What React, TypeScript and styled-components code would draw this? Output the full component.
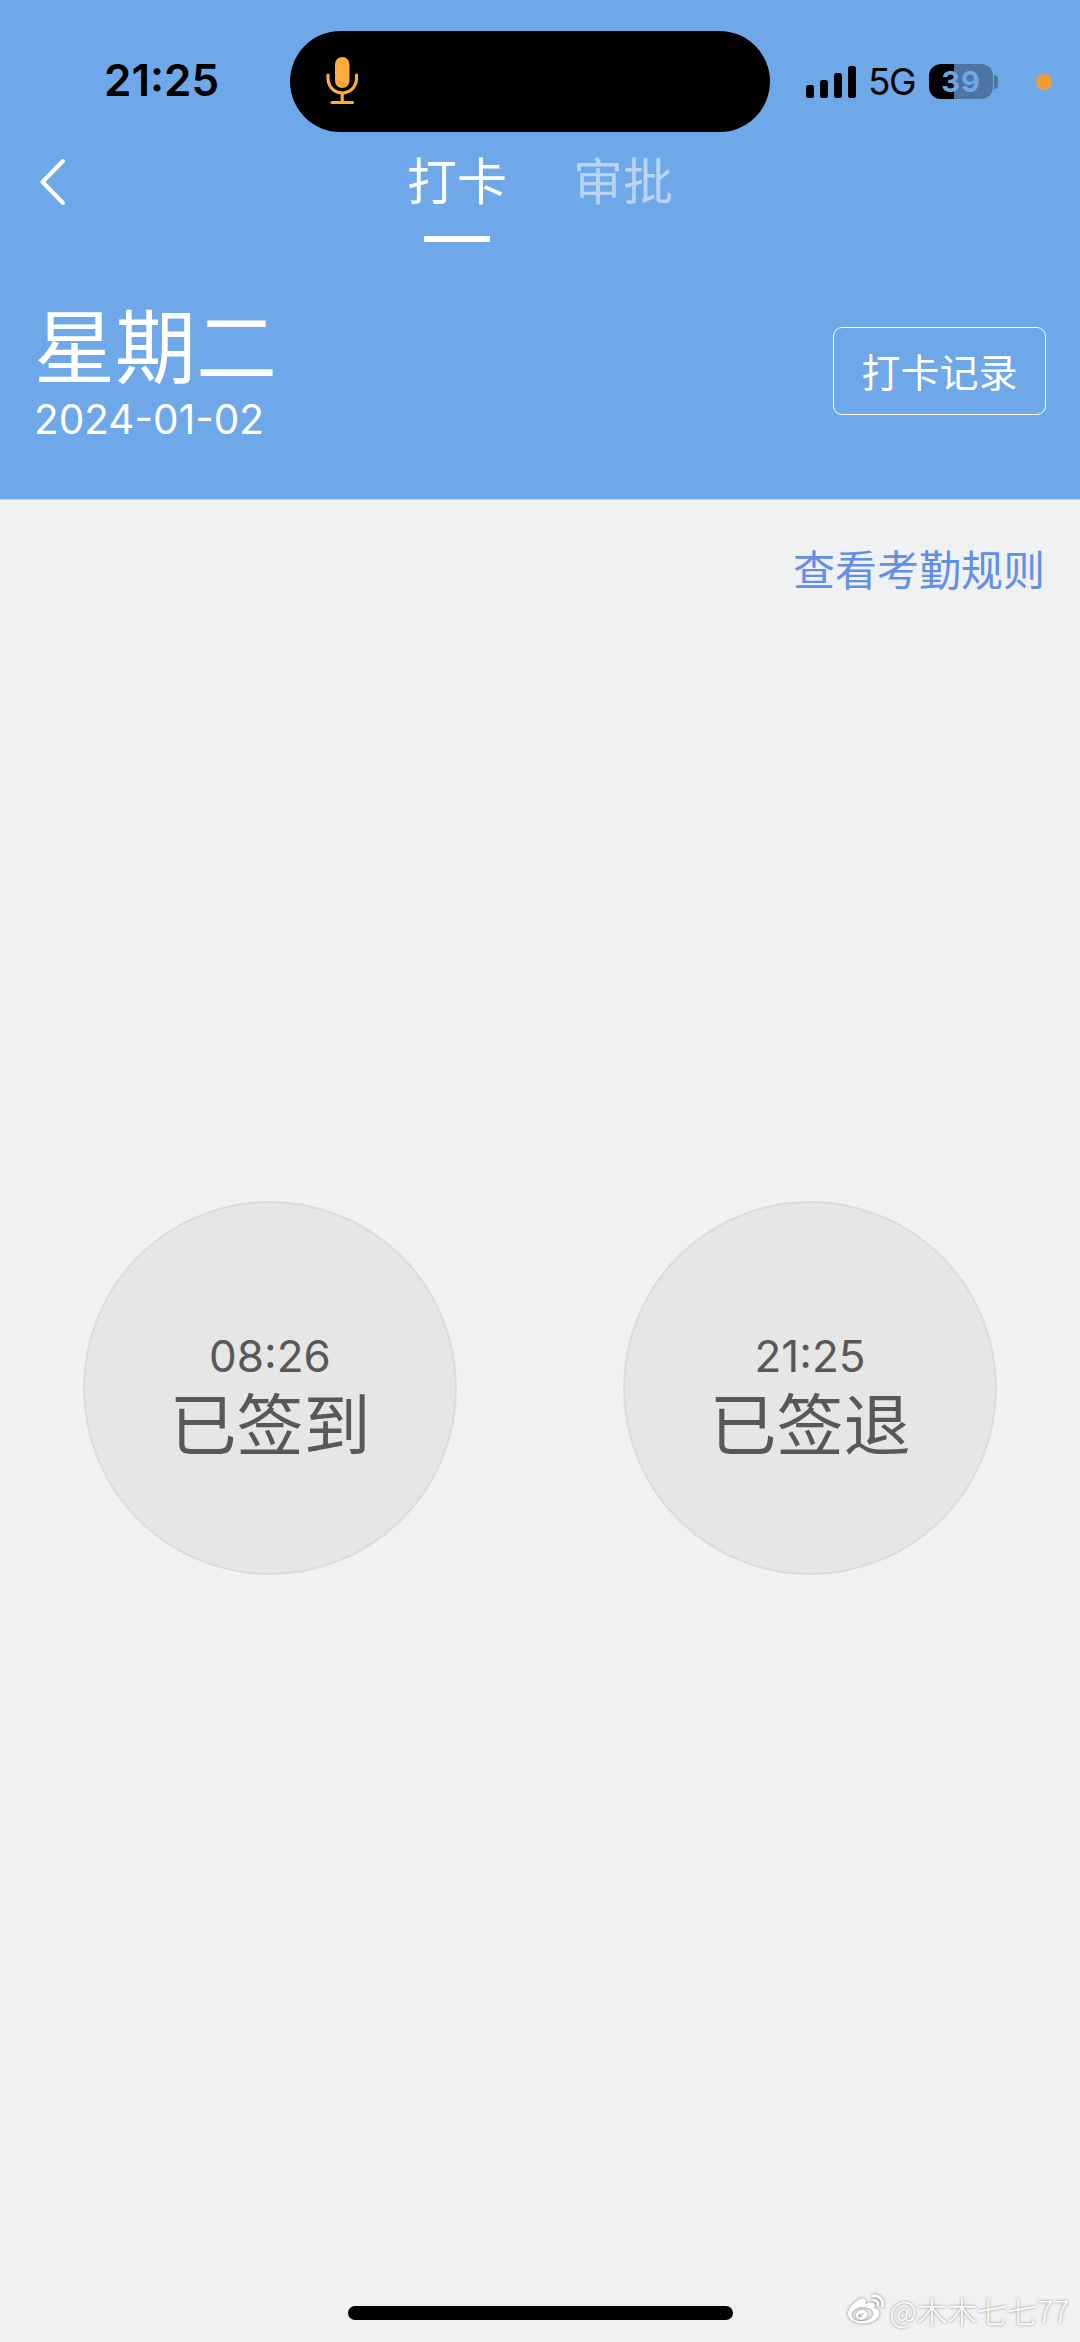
import * as React from "react";
import styled, { createGlobalStyle } from "styled-components";
import { FaWeibo } from "react-icons/fa";

const cjk = `"Noto Sans CJK SC", "Noto Sans", sans-serif`;

const GlobalStyle = createGlobalStyle`
  html, body {
    margin: 0;
    padding: 0;
    background: #f0f1f3;
  }
  * {
    box-sizing: border-box;
  }
`;

const Page = styled.div`
  position: relative;
  width: 1080px;
  height: 2342px;
  overflow: hidden;
  display: flex;
  flex-direction: column;
  background: #f0f1f3;
  font-family: ${cjk};
`;

const Header = styled.header`
  height: 500px;
  flex: none;
  background: #6fa8e9;
  border-bottom: 1px solid #b9d2ee;
`;

const StatusBar = styled.div`
  height: 132px;
  padding-top: 31px;
  display: flex;
  align-items: flex-start;
`;

const Clock = styled.div`
  width: 290px;
  padding: 24px 0 0 104px;
  font: 600 44px/50px Inter, "Liberation Sans", sans-serif;
  color: #000;
`;

const Island = styled.div`
  width: 480px;
  height: 101px;
  padding: 26px 0 0 36px;
  border-radius: 51px;
  background: #000;
`;

const StatusRight = styled.div`
  height: 101px;
  padding-left: 36px;
  display: flex;
  align-items: center;
`;

const Signal = styled.div`
  width: 50px;
  height: 32px;
  display: flex;
  align-items: flex-end;
  justify-content: space-between;
`;

const SignalBar = styled.span<{ $h: number }>`
  width: 8px;
  height: ${(p) => p.$h}px;
  border-radius: 2.5px;
  background: #000;
`;

const Network = styled.div`
  margin-left: 12px;
  font: 400 37px/40px Inter, "Liberation Sans", sans-serif;
  letter-spacing: -1.5px;
  color: #000;
`;

const Battery = styled.div<{ $level: number }>`
  width: 64px;
  height: 35px;
  margin-left: 14px;
  border-radius: 12px;
  display: flex;
  align-items: center;
  justify-content: center;
  background: linear-gradient(
    to right,
    #000 ${(p) => p.$level}%,
    rgba(0, 0, 0, 0.3) ${(p) => p.$level}%
  );
  font: 700 29px/35px Inter, "Liberation Sans", sans-serif;
  letter-spacing: 1px;
  color: #6fa8e9;
`;

const BatteryTip = styled.span`
  width: 4px;
  height: 14px;
  margin-left: 1px;
  border-radius: 0 4px 4px 0;
  background: rgba(0, 0, 0, 0.3);
`;

const RecordingDot = styled.span`
  width: 16px;
  height: 16px;
  margin-left: 38px;
  border-radius: 50%;
  background: #f29a35;
`;

const NavBar = styled.nav`
  position: relative;
  height: 110px;
  padding-top: 12px;
  display: flex;
  justify-content: center;
`;

const BackIcon = styled.svg`
  position: absolute;
  left: 38px;
  top: 26px;
`;

const Tabs = styled.div`
  display: flex;
  gap: 66px;
`;

const Tab = styled.div<{ $active?: boolean }>`
  display: flex;
  flex-direction: column;
  align-items: center;
  font-size: 50px;
  line-height: 68px;
  font-weight: 400;
  color: ${(p) => (p.$active ? "#fff" : "rgba(255,255,255,0.5)")};
`;

const TabLine = styled.span`
  width: 66px;
  height: 6px;
  margin-top: 24px;
  background: #fff;
`;

const DateRow = styled.div`
  display: flex;
  justify-content: space-between;
  align-items: flex-start;
  padding: 56px 34px 0 34px;
`;

const DateBlock = styled.div`
  display: flex;
  flex-direction: column;
`;

const Weekday = styled.div`
  font-size: 81px;
  line-height: 88px;
  font-weight: 400;
  color: #fff;
`;

const DateText = styled.div`
  margin-top: 10px;
  font: 400 40.5px/48px Inter, "Liberation Sans", sans-serif;
  color: #fff;
`;

const RecordButton = styled.div`
  width: 213px;
  height: 88px;
  margin-top: 29px;
  padding-bottom: 3px;
  border: 1.5px solid #fff;
  border-radius: 9px;
  display: flex;
  align-items: center;
  justify-content: center;
  font-size: 39px;
  font-weight: 400;
  color: #fff;
`;

const Main = styled.main`
  flex: 1;
  display: flex;
  flex-direction: column;
`;

const RulesLink = styled.div`
  padding: 38px 35px 0 0;
  text-align: right;
  font-size: 42px;
  line-height: 60px;
  font-weight: 400;
  color: #5f8fe6;
`;

const Punches = styled.div`
  display: flex;
  justify-content: space-around;
  padding-top: 603px;
`;

const PunchCircle = styled.div`
  width: 374px;
  height: 374px;
  padding-top: 12px;
  border: 2px solid #dcdcdc;
  border-radius: 50%;
  background: #e6e6e6;
  display: flex;
  flex-direction: column;
  align-items: center;
  justify-content: center;
  color: #585858;
`;

const PunchTime = styled.div`
  font: 400 44px/54px Inter, "Liberation Sans", sans-serif;
`;

const PunchLabel = styled.div`
  font-size: 67px;
  line-height: 76px;
  font-weight: 400;
`;

const HomeBar = styled.div`
  width: 385px;
  height: 14px;
  margin: auto auto 22px;
  border-radius: 7px;
  background: #000;
`;

const Watermark = styled.div`
  position: absolute;
  right: 11px;
  bottom: 10px;
  display: flex;
  align-items: center;
  gap: 6px;
  font-size: 30px;
  line-height: 44px;
  font-weight: 300;
  color: #fff;
  text-shadow: 0 0 3px #7d7d7d;

  svg {
    filter: drop-shadow(0 0 1.5px #7d7d7d);
  }
`;

const punches = [
  { time: "08:26", label: "已签到" },
  { time: "21:25", label: "已签退" },
];

const App = (): JSX.Element => (
  <Page>
    <GlobalStyle />
    <Header>
      <StatusBar>
        <Clock>21:25</Clock>
        <Island>
          <svg width="32" height="48" viewBox="0 0 32 48" fill="none">
            <rect x="9" y="0" width="14.5" height="31" rx="7.25" fill="#ffab3d" />
            <path
              d="M2 18v3c0 8.5 6 15 14.2 15S30.500 29.500 30.500 21v-3M16.200 36v9M6 45.500h20.500"
              stroke="#ffab3d"
              strokeWidth="3.2"
              strokeLinecap="round"
            />
          </svg>
        </Island>
        <StatusRight>
          <Signal>
            <SignalBar $h={13} />
            <SignalBar $h={18} />
            <SignalBar $h={25} />
            <SignalBar $h={32} />
          </Signal>
          <Network>5G</Network>
          <Battery $level={39}>39</Battery>
          <BatteryTip />
          <RecordingDot />
        </StatusRight>
      </StatusBar>
      <NavBar>
        <BackIcon width="28" height="48" viewBox="0 0 28 48" fill="none">
          <path
            d="M25 3 4.5 24 25 45"
            stroke="#fff"
            strokeWidth="4"
            strokeLinecap="round"
            strokeLinejoin="round"
          />
        </BackIcon>
        <Tabs>
          <Tab $active>
            打卡
            <TabLine />
          </Tab>
          <Tab>审批</Tab>
        </Tabs>
      </NavBar>
      <DateRow>
        <DateBlock>
          <Weekday>星期二</Weekday>
          <DateText>2024-01-02</DateText>
        </DateBlock>
        <RecordButton>打卡记录</RecordButton>
      </DateRow>
    </Header>
    <Main>
      <RulesLink>查看考勤规则</RulesLink>
      <Punches>
        {punches.map((punch) => (
          <PunchCircle key={punch.label}>
            <PunchTime>{punch.time}</PunchTime>
            <PunchLabel>{punch.label}</PunchLabel>
          </PunchCircle>
        ))}
      </Punches>
      <HomeBar />
    </Main>
    <Watermark>
      <FaWeibo size={36} />
      @木木七七77
    </Watermark>
  </Page>
);

export default App;
